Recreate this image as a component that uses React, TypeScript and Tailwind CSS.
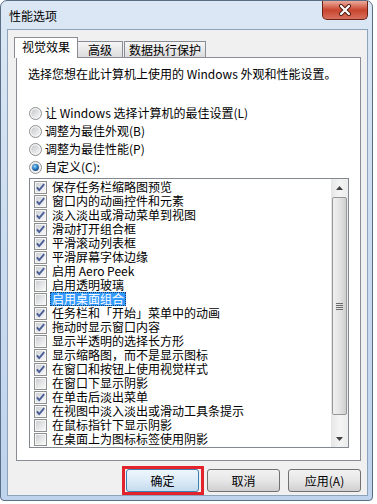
import React from 'react'

const items: [string, boolean][] = [
  ['保存任务栏缩略图预览', true],
  ['窗口内的动画控件和元素', true],
  ['淡入淡出或滑动菜单到视图', true],
  ['滑动打开组合框', true],
  ['平滑滚动列表框', true],
  ['平滑屏幕字体边缘', true],
  ['启用 Aero Peek', true],
  ['启用透明玻璃', false],
  ['启用桌面组合', false],
  ['任务栏和「开始」菜单中的动画', true],
  ['拖动时显示窗口内容', true],
  ['显示半透明的选择长方形', false],
  ['显示缩略图，而不是显示图标', true],
  ['在窗口和按钮上使用视觉样式', true],
  ['在窗口下显示阴影', false],
  ['在单击后淡出菜单', true],
  ['在视图中淡入淡出或滑动工具条提示', true],
  ['在鼠标指针下显示阴影', false],
  ['在桌面上为图标标签使用阴影', false],
]

const radios: [string, boolean][] = [
  ['让 Windows 选择计算机的最佳设置(L)', false],
  ['调整为最佳外观(B)', false],
  ['调整为最佳性能(P)', false],
  ['自定义(C):', true],
]

function Radio({ on }: { on: boolean }) {
  return (
    <svg width="13" height="13" viewBox="0 0 13 13" className="shrink-0">
      <defs>
        <linearGradient id="rbg" x1="0" y1="0" x2="1" y2="1">
          <stop offset="0" stopColor="#c6c8cc" />
          <stop offset="1" stopColor="#f7f7f7" />
        </linearGradient>
        <radialGradient id="rdot" cx="0.4" cy="0.35" r="0.75">
          <stop offset="0" stopColor="#9fdcf8" />
          <stop offset="0.45" stopColor="#2f86cc" />
          <stop offset="1" stopColor="#0f3a72" />
        </radialGradient>
      </defs>
      <circle cx="6.5" cy="6.5" r="6" fill="#f4f4f4" stroke="#8e8f8f" />
      <circle cx="6.5" cy="6.5" r="4.3" fill="url(#rbg)" />
      {on && <circle cx="6.5" cy="6.5" r="3.4" fill="url(#rdot)" />}
    </svg>
  )
}

function Check({ on }: { on: boolean }) {
  return (
    <svg width="13" height="13" viewBox="0 0 13 13" className="shrink-0">
      <defs>
        <linearGradient id="cbg" x1="0" y1="0" x2="1" y2="1">
          <stop offset="0" stopColor="#cdd0d4" />
          <stop offset="1" stopColor="#f8f8f8" />
        </linearGradient>
      </defs>
      <rect x="0.5" y="0.5" width="12" height="12" fill="#f6f6f6" stroke="#8e8f8f" />
      <rect x="2" y="2" width="9" height="9" fill="url(#cbg)" />
      {on && (
        <path d="M2.8 6.4 L5.2 9 L10.2 3.2" fill="none" stroke="#4a5f97" strokeWidth="1.9" />
      )}
    </svg>
  )
}

function Button({ label, primary }: { label: string; primary?: boolean }) {
  return (
    <div
      className={`relative w-[73px] h-[23px] rounded-[3px] border flex items-center justify-center text-[12px] text-black ${
        primary
          ? 'border-[#3c7fb1] bg-gradient-to-b from-[#eef6fc] via-[#dcebf7] to-[#c5dbec]'
          : 'border-[#707070] bg-gradient-to-b from-[#f2f2f2] via-[#e6e6e6] to-[#d0d0d0]'
      }`}
    >
      {label}
      {primary && (
        <span className="absolute -left-[5px] -right-[6px] -top-[4px] -bottom-[4px] border-[3px] border-[#e3232c]" />
      )}
    </div>
  )
}

export default function App() {
  return (
    <div className="w-[377px] h-[504px] bg-white font-['Noto_Sans_CJK_SC',sans-serif] text-[12px] leading-[14px] text-black overflow-hidden">
      <div className="relative w-[373px] h-[501px] rounded-t-[7px] rounded-b-[4px] border border-[#5a6d85] bg-gradient-to-b from-[#dbe7f4] via-[#cadcf0] to-[#bed3ec] flex flex-col pl-[6px] pr-[4px] pb-[4px]">
        <div className="h-[28px] flex items-start justify-between">
          <span className="pt-[8px] pl-[2px]">性能选项</span>
          <div className="w-[46px] h-[19px] rounded-b-[5px] border border-t-0 border-[#6b2317] bg-gradient-to-b from-[#e9a99c] via-[#c9442d] to-[#d5705e] flex items-center justify-center">
            <svg width="14" height="12" viewBox="0 0 14 12">
              <path d="M3 2 L11 10 M11 2 L3 10" stroke="#4a1a12" strokeWidth="4" strokeLinecap="round" />
              <path d="M3 2 L11 10 M11 2 L3 10" stroke="#ffffff" strokeWidth="2.2" strokeLinecap="round" />
            </svg>
          </div>
        </div>

        <div className="flex-1 border border-[#8da2bd] bg-[#f0f0f0] flex flex-col">
          <div className="flex items-end pt-[7px] pl-[6px]">
            <div className="relative z-10 h-[21px] w-[64px] -mb-[1px] border border-b-0 border-[#898c95] bg-white flex items-center justify-center pb-[2px]">
              视觉效果
            </div>
            <div className="h-[16px] w-[45px] border border-l-0 border-b-0 border-[#898c95] bg-gradient-to-b from-[#f6f6f6] to-[#dcdcdc] flex items-center justify-center">
              高级
            </div>
            <div className="h-[16px] w-[82px] ml-[1px] border border-b-0 border-[#898c95] bg-gradient-to-b from-[#f6f6f6] to-[#dcdcdc] flex items-center justify-center">
              数据执行保护
            </div>
          </div>

          <div className="mx-[8px] mr-[6px] h-[404px] border border-[#898c95] bg-white flex flex-col pl-[11px] pt-[9px]">
            <div>选择您想在此计算机上使用的 Windows 外观和性能设置。</div>

            <div className="mt-[23px] flex flex-col">
              {radios.map(([label, on]) => (
                <div key={label} className="h-[18px] flex items-center gap-[3px] pl-[1px]">
                  <Radio on={on} />
                  <span>{label}</span>
                </div>
              ))}
            </div>

            <div className="mt-[2px] ml-[1px] w-[320px] h-[270px] border border-[#828790] bg-white flex">
              <div className="flex-1 flex flex-col pt-[1px] pl-[4px]">
                {items.map(([label, on], i) => (
                  <div key={label} className="h-[14px] flex items-center">
                    <Check on={on} />
                    <span
                      className={`ml-[3px] px-[2px] h-[14px] flex items-center ${
                        i === 8 ? 'bg-[#3399ff] text-white outline outline-1 outline-dotted outline-[#1a3f6b] -outline-offset-1' : ''
                      }`}
                    >
                      {label}
                    </span>
                  </div>
                ))}
              </div>

              <div className="w-[17px] flex flex-col bg-gradient-to-r from-[#e6e6e6] via-[#f4f4f4] to-[#ececec]">
                <div className="h-[17px] flex items-center justify-center">
                  <svg width="7" height="4" viewBox="0 0 7 4">
                    <path d="M0 4 L3.5 0 L7 4 Z" fill="#404040" />
                  </svg>
                </div>
                <div className="flex-1 flex flex-col items-center">
                  <div className="mt-[1px] w-[15px] h-[218px] rounded-[2px] border border-[#979797] bg-gradient-to-r from-[#f0f0f0] via-[#e4e4e4] to-[#cfcfcf] flex flex-col items-center justify-center gap-[1px]">
                    <span className="w-[7px] h-[1px] bg-[#6b6b6b]" />
                    <span className="w-[7px] h-[1px] bg-[#6b6b6b]" />
                    <span className="w-[7px] h-[1px] bg-[#6b6b6b]" />
                    <span className="w-[7px] h-[1px] bg-[#6b6b6b]" />
                  </div>
                </div>
                <div className="h-[17px] flex items-center justify-center">
                  <svg width="7" height="4" viewBox="0 0 7 4">
                    <path d="M0 0 L7 0 L3.5 4 Z" fill="#404040" />
                  </svg>
                </div>
              </div>
            </div>
          </div>

          <div className="mt-[8px] pr-[6px] flex justify-end gap-[8px]">
            <Button label="确定" primary />
            <Button label="取消" />
            <Button label="应用(A)" />
          </div>
        </div>
      </div>
    </div>
  )
}
